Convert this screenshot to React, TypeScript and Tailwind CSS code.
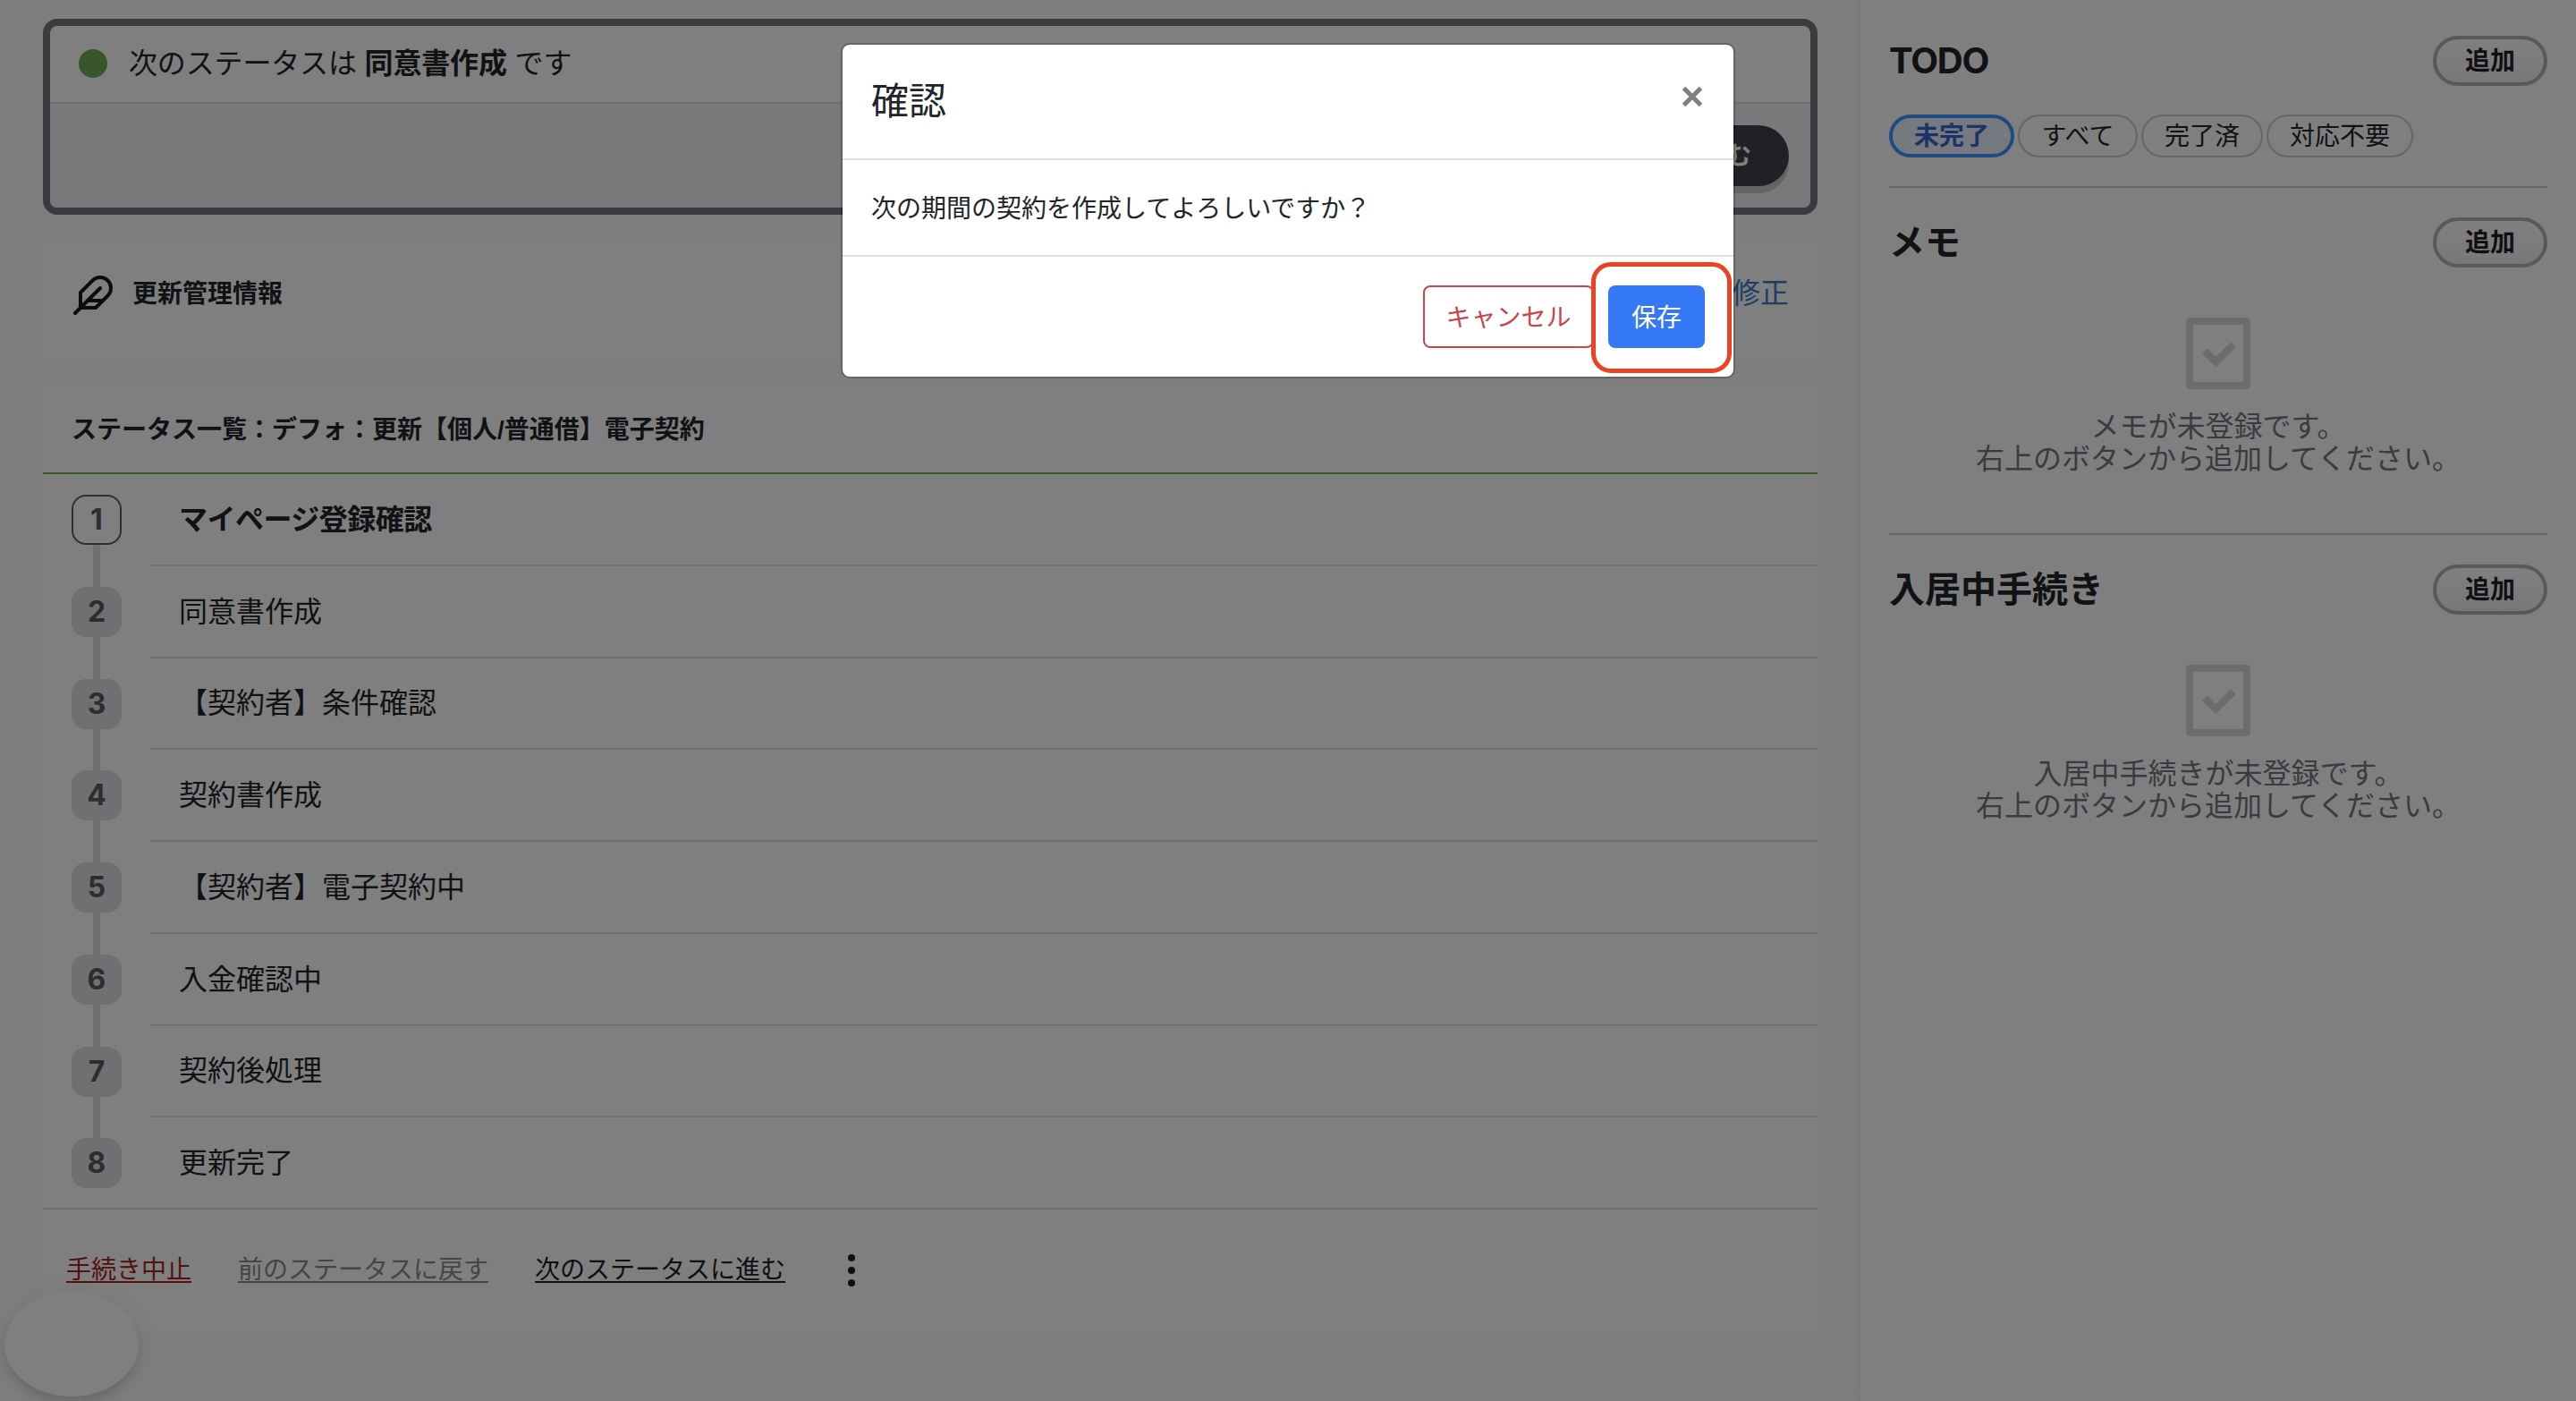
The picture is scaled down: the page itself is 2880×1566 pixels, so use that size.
import type { ReactNode } from "react";

const FONT =
  "font-['Liberation_Sans','Noto_Sans_CJK_JP',sans-serif] text-[#212529]";

const STEPS = [
  "マイページ登録確認",
  "同意書作成",
  "【契約者】条件確認",
  "契約書作成",
  "【契約者】電子契約中",
  "入金確認中",
  "契約後処理",
  "更新完了",
];

function FeatherIcon() {
  return (
    <svg viewBox="0 0 24 24" className="size-12" fill="none" stroke="#1b1b1f" strokeWidth="2" strokeLinecap="round" strokeLinejoin="round">
      <path d="M20.24 12.24a6 6 0 0 0-8.49-8.49L5 10.5V19h8.5z" />
      <path d="M16 8 2 22" />
      <path d="M17.5 15H9" />
    </svg>
  );
}

function CheckIcon() {
  return (
    <svg viewBox="0 0 72 80" className="h-20 w-[72px]" fill="none" stroke="#d9d9d9" strokeWidth="8">
      <rect x="4" y="4" width="64" height="72" rx="0.500" />
      <path d="M20.700 37.100 33.300 49.700 53 30.200" />
    </svg>
  );
}

function StatusCard() {
  return (
    <section className="h-[219px] rounded-2xl border-8 border-[#77757f] bg-white">
      <div className="flex h-[87px] items-center border-b-2 border-[#dedede] pb-0.5 pl-8 text-[32px] leading-none tracking-[-0.15px]">
        <span className="mr-6 size-8 rounded-full bg-[#70ac54]" />
        <p>
          次のステータスは <b>同意書作成</b> です
        </p>
      </div>
      <div className="flex h-[116px] justify-end rounded-b-lg bg-[#f3f3f7] pt-6 pr-6">
        <button className="h-[68px] rounded-full bg-[#434149] px-[42px] pt-0.5 text-[28px] font-bold leading-none text-white shadow-[0_8px_0_#c9c9c9]">
          次に進む
        </button>
      </div>
    </section>
  );
}

function StepRow({ index, label }: { index: number; label: string }) {
  const first = index === 0;
  const last = index === STEPS.length - 1;
  return (
    <li className="flex h-[102.75px]">
      <div className={"flex w-[120px] shrink-0 flex-col items-center " + (last ? "border-b-2 border-[#dedede]" : "")}>
        <span className={"h-[23px] w-2 shrink-0 " + (first ? "" : "bg-[#e0e0e4]")} />
        <span
          className={
            "flex size-14 shrink-0 items-center justify-center rounded-2xl font-[Inter] text-[32px] font-bold leading-none " +
            (first ? "border-2 border-[#5e5d66] text-[#5e5d66]" : "bg-[#e0e0e4] text-[#5a5a5a]")
          }
        >
          {index + 1}
        </span>
        <span className={"w-2 flex-1 " + (last ? "" : "bg-[#e0e0e4]")} />
      </div>
      <div className="flex flex-1 items-center border-b-2 border-[#dedede] pt-px pl-8 text-[32px] leading-none">
        {first ? <b className="tracking-[-0.5px]">{label}</b> : <span>{label}</span>}
      </div>
    </li>
  );
}

function Main() {
  return (
    <main className="h-full w-[2078px] shrink-0 pt-[21px] pr-[46px] pl-12">
      <StatusCard />
      <section className="mt-8 flex h-32 bg-white pt-[34px] pr-8 pl-8">
        <div className="flex h-12 flex-1 items-center text-[28px] leading-none">
          <FeatherIcon />
          <b className="ml-5 pb-0.5">更新管理情報</b>
          <span className="ml-auto pb-1 text-[32px] text-[#3f7cc4]">修正</span>
        </div>
      </section>
      <section className="mt-8 h-[1056px] bg-white">
        <h2 className="flex h-[98px] items-center border-b-2 border-[#6fac53] pt-0.5 pl-8 text-[28px] font-bold leading-none">
          ステータス一覧：デフォ：更新【個人/普通借】電子契約
        </h2>
        <ol>
          {STEPS.map((label, i) => (
            <StepRow key={label} index={i} label={label} />
          ))}
        </ol>
        <div className="mt-[50px] flex h-9 items-center pl-[26px] text-[28px] leading-[26px]">
          <span className="h-7 border-b-2 border-[#a92222] pt-px text-[#a92222]">手続き中止</span>
          <span className="ml-13 h-7 border-b-2 border-[#8a8a8a] pt-px text-[#8a8a8a]">前のステータスに戻す</span>
          <span className="ml-13 h-7 border-b-2 border-[#212127] pt-px text-[#212127]">次のステータスに進む</span>
          <span className="ml-[70px] flex flex-col gap-1.5">
            <i className="size-2 rounded-full bg-[#212127]" />
            <i className="size-2 rounded-full bg-[#212127]" />
            <i className="size-2 rounded-full bg-[#212127]" />
          </span>
        </div>
      </section>
    </main>
  );
}

function PanelHead({ title }: { title: ReactNode }) {
  return (
    <div className="flex h-14 items-center justify-between">
      <h2 className="pb-px text-[40px] font-bold leading-none">{title}</h2>
      <button className="h-14 w-32 rounded-full border-4 border-[#b2b2b4] bg-linear-to-b from-white to-[#f1f1f3] pt-px text-[28px] font-bold leading-none text-[#212127]">
        追加
      </button>
    </div>
  );
}

function Empty({ children }: { children: ReactNode }) {
  return (
    <div className="mt-14 flex flex-col items-center text-center text-[32px] leading-9 text-[#77757f]">
      <CheckIcon />
      <p className="mt-6">
        {children}
        <br />
        右上のボタンから追加してください。
      </p>
    </div>
  );
}

function Chip({ width, children }: { width: string; children: ReactNode }) {
  return (
    <span className={"flex h-12 items-center justify-center rounded-full border-2 border-[#cacaca] pt-0.5 " + width}>{children}</span>
  );
}

function Sidebar() {
  return (
    <aside className="h-full flex-1 border-l-2 border-[#f4f4f4] bg-white pr-8 pl-8 shadow-[0_0_12px_rgba(0,0,0,0.06)]">
      <section className="h-[210px] border-b-2 border-[#cacaca] pt-10">
        <PanelHead title={<span className="font-[Inter] tracking-[-1.200px]">TODO</span>} />
        <div className="mt-8 flex gap-1 text-[28px] leading-none">
          <span className="flex h-12 w-[140px] items-center justify-center rounded-full border-4 border-[#3c96ff] bg-[#ecf2ff] pt-0.5 font-bold text-[#3468d0]">
            未完了
          </span>
          <Chip width="w-[134px]">すべて</Chip>
          <Chip width="w-[136px]">完了済</Chip>
          <Chip width="w-[164px]">対応不要</Chip>
        </div>
      </section>
      <section className="h-[388px] border-b-2 border-[#cacaca] pt-[33px]">
        <PanelHead title="メモ" />
        <Empty>メモが未登録です。</Empty>
      </section>
      <section className="pt-[33px]">
        <PanelHead title="入居中手続き" />
        <Empty>入居中手続きが未登録です。</Empty>
      </section>
    </aside>
  );
}

function Modal() {
  return (
    <div className="absolute top-12 left-[940px] w-[1000px] rounded-[10px] border-2 border-black/20 bg-white bg-clip-padding">
      <header className="flex h-[129px] items-center justify-between border-b-2 border-[#dee2e6] px-8">
        <h1 className="text-[42px] leading-none">確認</h1>
        <svg viewBox="0 0 24 24" className="mr-0.5 mb-3 size-6" stroke="#808080" strokeWidth="5.200">
          <path d="M2.500 2.500 21.500 21.500M21.500 2.500 2.500 21.500" />
        </svg>
      </header>
      <p className="flex h-[106px] items-center px-8 pt-[3px] text-[28px] leading-none">次の期間の契約を作成してよろしいですか？</p>
      <footer className="flex h-[136px] justify-end gap-4 border-t-2 border-[#dee2e6] px-8 pt-8 text-[28px] leading-none">
        <button className="h-[70px] w-[191px] rounded-lg border-2 border-[#cb444a] pt-[3px] text-[#cb444a]">キャンセル</button>
        <button className="relative h-[70px] w-[108px] rounded-lg bg-[#3478f6] pt-[3px] text-white">
          保存
          <span className="absolute -top-[26px] -left-[19px] h-[124px] w-[157px] rounded-[22px] border-5 border-[#eb4226]" />
        </button>
      </footer>
    </div>
  );
}

export default function App() {
  return (
    <div className={"relative h-[1566px] w-[2880px] overflow-hidden bg-[#fcfcfc] " + FONT}>
      <div className="flex h-full">
        <Main />
        <Sidebar />
      </div>
      <div className="absolute top-[1444px] left-[5px] h-[117px] w-[150px] rounded-[50%] bg-white shadow-[0_8px_16px_-4px_rgba(0,0,0,0.18),0_2px_36px_rgba(0,0,0,0.07)]" />
      <div className="absolute inset-0 bg-black/50" />
      <Modal />
    </div>
  );
}
